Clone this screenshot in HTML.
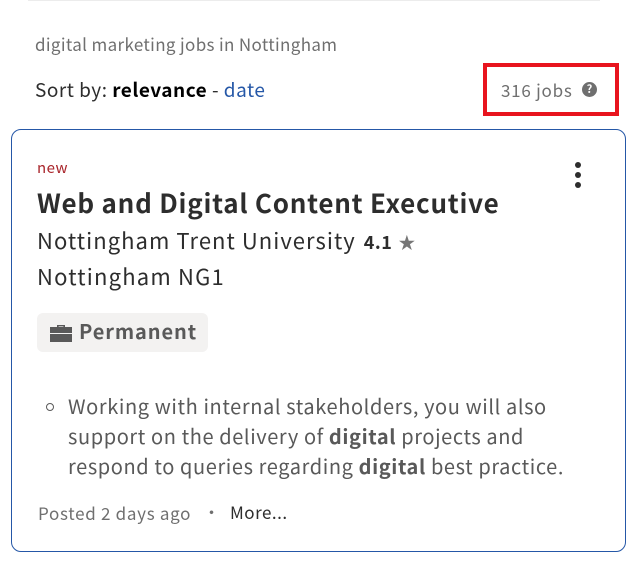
<!DOCTYPE html>
<html><head><meta charset="utf-8"><style>
*{margin:0;padding:0;box-sizing:border-box}
body{width:637px;height:563px;background:#fff;font-family:"Noto Sans CJK SC","DejaVu Sans",sans-serif;color:#2d2d2d;position:relative;overflow:hidden}
.a{position:absolute;white-space:nowrap;line-height:1}
</style></head><body>
<div style="position:absolute;left:28px;top:0;width:572px;height:1px;background:#ececec"></div>
<div class="a" style="left:35px;top:35px;font-size:17px;letter-spacing:0.35px;color:#6f6f6f">digital marketing jobs in Nottingham</div>
<div class="a" style="left:35px;top:80px;font-size:19px;letter-spacing:0.5px;color:#2d2d2d">Sort by: <b style="color:#000">relevance</b> - <span style="color:#2557a7">date</span></div>
<div style="position:absolute;left:483px;top:63px;width:136px;height:53px;border:4px solid #e8141e"></div>
<div class="a" style="left:501px;top:81px;font-size:17px;letter-spacing:0.75px;color:#6f6f6f">316 jobs</div>
<div style="position:absolute;left:582px;top:82px;width:15px;height:15px;border-radius:50%;background:#6f6f6f;color:#fff;font-size:11px;font-weight:bold;text-align:center;line-height:15px">?</div>
<div style="position:absolute;left:11px;top:129px;width:615px;height:423px;border:1px solid #2557a7;border-radius:10px"></div>
<div class="a" style="left:37px;top:160px;font-size:15px;letter-spacing:0.5px;color:#a9252b">new</div>
<div style="position:absolute;left:575px;top:162px;width:6px;height:6px;border-radius:50%;background:#2d2d2d;box-shadow:0 10px 0 #2d2d2d,0 20px 0 #2d2d2d"></div>
<div class="a" style="left:37px;top:190px;font-size:26px;letter-spacing:0.75px;font-weight:bold;color:#2d2d2d">Web and Digital Content Executive</div>
<div class="a" style="left:37px;top:229px;font-size:22px;letter-spacing:1.05px">Nottingham Trent University <b style="font-size:18px;margin-left:2px;letter-spacing:0.5px">4.1</b> <span style="color:#767676;font-size:17px">★</span></div>
<div class="a" style="left:37px;top:265px;font-size:22px;letter-spacing:1.2px">Nottingham NG1</div>
<div style="position:absolute;left:37px;top:313px;width:171px;height:39px;background:#f3f2f1;border-radius:6px"></div>
<svg style="position:absolute;left:50px;top:324px" width="22" height="18" viewBox="0 0 22 18"><path d="M7 3V1h8v2h-1.6V2.4H8.6V3z" fill="#595959"/><rect x="0" y="3" width="22" height="6" fill="#595959"/><rect x="0" y="10" width="22" height="8" fill="#595959"/></svg>
<div class="a" style="left:79px;top:321px;font-size:20px;letter-spacing:0.9px;font-weight:bold;color:#595959">Permanent</div>
<div style="position:absolute;left:46px;top:403px;width:8px;height:8px;border:1.3px solid #595959;border-radius:50%"></div>
<div style="position:absolute;left:68px;top:391px;font-size:20px;line-height:30px;letter-spacing:0.6px;color:#595959;white-space:nowrap">Working with internal stakeholders, you will also<br>support on the delivery of <b>digital</b> projects and<br>respond to queries regarding <b>digital</b> best practice.</div>
<div class="a" style="left:38px;top:504px;font-size:17px;letter-spacing:0.7px;color:#6f6f6f">Posted 2 days ago</div>
<div class="a" style="left:203px;top:503px;font-size:17px;color:#6f6f6f">·</div>
<div class="a" style="left:230px;top:503px;font-size:17px;letter-spacing:0.5px;color:#2d2d2d">More...</div>
</body></html>
